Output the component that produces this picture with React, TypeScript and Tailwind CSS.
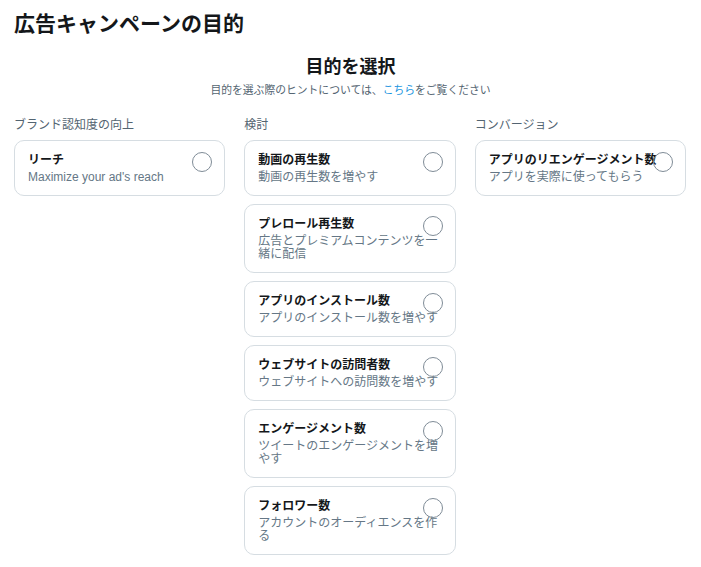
import React from 'react';

interface Objective {
  title: string;
  description: string;
}

interface Group {
  label: string;
  items: Objective[];
}

const groups: Group[] = [
  {
    label: 'ブランド認知度の向上',
    items: [{ title: 'リーチ', description: "Maximize your ad's reach" }],
  },
  {
    label: '検討',
    items: [
      { title: '動画の再生数', description: '動画の再生数を増やす' },
      { title: 'プレロール再生数', description: '広告とプレミアムコンテンツを一緒に配信' },
      { title: 'アプリのインストール数', description: 'アプリのインストール数を増やす' },
      { title: 'ウェブサイトの訪問者数', description: 'ウェブサイトへの訪問数を増やす' },
      { title: 'エンゲージメント数', description: 'ツイートのエンゲージメントを増やす' },
      { title: 'フォロワー数', description: 'アカウントのオーディエンスを作る' },
    ],
  },
  {
    label: 'コンバージョン',
    items: [{ title: 'アプリのリエンゲージメント数', description: 'アプリを実際に使ってもらう' }],
  },
];

const ObjectiveCard: React.FC<{ item: Objective }> = ({ item }) => (
  <label className="relative block rounded-[10px] border border-[#d6dde2] bg-white px-[13px] pt-[11px] pb-[11px] cursor-pointer">
    <div className="text-xs leading-4 font-bold text-[#14171a]">{item.title}</div>
    <div className="mt-[3px] text-xs leading-[13px] text-[#657786]">{item.description}</div>
    {/* ラジオボタン */}
    <span className="absolute top-[11px] right-[12px] w-5 h-5 rounded-full border border-[#7f8c97]"></span>
  </label>
);

const App: React.FC = () => {
  return (
    <div
      className="min-h-screen bg-white text-[#14171a]"
      style={{ fontFamily: '"Liberation Sans", "Noto Sans CJK JP", sans-serif' }}
    >
      <h1 className="pl-[14px] pt-[10px] text-[21px] leading-7 font-bold">広告キャンペーンの目的</h1>

      <div className="mt-[17px] text-center">
        <h2 className="text-[18px] leading-6 font-bold">目的を選択</h2>
        <p className="mt-[3px] text-[10.8px] leading-4 text-[#536471]">
          目的を選ぶ際のヒントについては、<span className="text-[#1b95e0]">こちら</span>をご覧ください
        </p>
      </div>

      <div className="mt-[19px] grid grid-cols-3 gap-[19px] pl-[14px] pr-[15px] items-start">
        {groups.map(group => (
          <div key={group.label}>
            <div className="text-xs leading-4 text-[#536471] mb-[7px]">{group.label}</div>
            <div className="flex flex-col gap-[8px]">
              {group.items.map(item => (
                <ObjectiveCard key={item.title} item={item} />
              ))}
            </div>
          </div>
        ))}
      </div>
    </div>
  );
};

export default App;
